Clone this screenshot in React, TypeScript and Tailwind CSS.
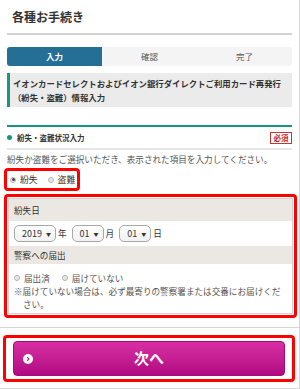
const STEPS = ["入力", "確認", "完了"];

function Radio({ checked, label }: { checked?: boolean; label: string }) {
  return (
    <label className="flex shrink-0 items-center gap-[4px] whitespace-nowrap">
      <span className="flex h-[6px] w-[6px] shrink-0 items-center justify-center rounded-full border border-[#b5b5b5] bg-[#e8e8e8]">
        {checked && <span className="h-[3px] w-[3px] rounded-full bg-[#444]" />}
      </span>
      <span>{label}</span>
    </label>
  );
}

function Select({ value, width }: { value: string; width: string }) {
  return (
    <div
      className={`flex h-[17px] items-center justify-between rounded-[5px] border border-[#a8a8a8] bg-gradient-to-b from-white to-[#f1f1f1] pl-[7px] pr-[4px] text-[9px] ${width}`}
    >
      <span>{value}</span>
      <span className="text-[5px]">▼</span>
    </div>
  );
}

export default function App() {
  return (
    <div className="flex h-[389px] w-[300px] flex-col overflow-hidden border-r border-b border-[#d6d6d6] bg-white font-['Noto_Sans_CJK_JP',sans-serif] text-[#333]">
      <div className="border-b border-[#d6d6d6] px-[7px] pb-[9px]">
        <div className="flex h-[33px] items-center pl-[5px] text-[12px] font-bold">各種お手続き</div>
        <div className="h-[2px] bg-[#d3d3d3]" />

        <div className="mt-[12px] flex h-[19px] overflow-hidden rounded-[3px] bg-[#f4f4f4] text-[8.5px]">
          {STEPS.map((s, i) => (
            <div
              key={s}
              className={`flex flex-1 items-center justify-center ${
                i === 0 ? "bg-[#256e95] font-bold text-white" : "text-[#555]"
              }`}
            >
              {s}
            </div>
          ))}
        </div>

        <div className="mt-[7px] flex h-[34px] flex-col justify-center border-l-[3px] border-[#17987d] bg-[#ebebeb] pl-[3px] text-[8.4px] font-bold leading-[14px]">
          <p>イオンカードセレクトおよびイオン銀行ダイレクトご利用カード再発行</p>
          <p>（紛失・盗難）情報入力</p>
        </div>

        <div className="mt-[18px] h-[2px] bg-[#12977c]" />
        <div className="flex h-[21px] items-center justify-between">
          <div className="flex items-center gap-[5px] text-[7.5px] font-bold">
            <span className="h-[5px] w-[5px] rounded-full bg-[#12977c]" />
            紛失・盗難状況入力
          </div>
          <span className="flex h-[12px] w-[22px] items-center justify-center border border-[#c43535] text-[7.5px] font-bold text-[#c41e1e]">
            必須
          </span>
        </div>
        <div className="h-[2px] bg-[#e6e6e6]" />

        <p className="flex h-[18px] items-center text-[8.6px] text-[#555]">
          紛失か盗難をご選択いただき、表示された項目を入力してください。
        </p>

        <div className="-ml-[3px] flex h-[23px] w-[76px] items-center gap-[10px] rounded-[4px] border-[3px] border-[#f00] pl-[3px] text-[8.8px]">
          <Radio checked label="紛失" />
          <Radio label="盗難" />
        </div>

        <div className="-ml-[3px] mt-[3px] w-[293px] rounded-[4px] border-[3px] border-[#f00] p-px text-[8.6px]">
          <div className="border border-[#d2d2d2]">
            <div className="flex h-[22px] items-center bg-[#ebe7e2] pl-[5px]">紛失日</div>
            <div className="flex h-[25px] items-center gap-[2px] pl-[5px]">
              <Select value="2019" width="w-[42px]" />
              <span className="mr-[3px]">年</span>
              <Select value="01" width="w-[32px]" />
              <span className="mr-[3px]">月</span>
              <Select value="01" width="w-[32px]" />
              <span>日</span>
            </div>
            <div className="flex h-[18px] items-center bg-[#ebe7e2] pl-[5px]">警察への届出</div>
            <div className="px-[5px] pt-[8px] pb-[2px]">
              <div className="flex h-[12px] items-center gap-[12px] text-[#555]">
                <Radio label="届出済" />
                <Radio label="届けていない" />
              </div>
              <p className="mt-[1px] pl-[9px] -indent-[9px] leading-[13px] text-[#555]">
                ※届けていない場合は、必ず最寄りの警察署または交番にお届けください。
              </p>
            </div>
          </div>
        </div>
      </div>

      <div className="px-[3px] pt-[7px]">
        <div className="w-[292px] rounded-[4px] border-[3px] border-[#f00] px-[7px] py-[3px]">
          <button className="relative flex h-[35px] w-full items-center justify-center rounded-[4px] border border-[#a50a7c] bg-gradient-to-b from-[#d82fa3] to-[#b10782] text-[15px] font-bold text-white">
            <span className="absolute left-[9px] top-1/2 flex h-[10px] w-[10px] -translate-y-1/2 items-center justify-center rounded-full bg-white">
              <svg viewBox="0 0 10 10" className="h-[6px] w-[6px]">
                <path d="M3.5 2 L6.5 5 L3.5 8" fill="none" stroke="#b8108a" strokeWidth="1.8" />
              </svg>
            </span>
            次へ
          </button>
        </div>
      </div>
    </div>
  );
}
